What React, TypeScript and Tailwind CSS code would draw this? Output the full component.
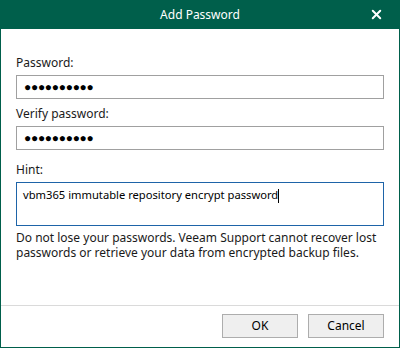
import { X } from "lucide-react";

const font = { fontFamily: '"Noto Sans", "Open Sans", sans-serif' };

function Field({ label, value }: { label: string; value: string }) {
  return (
    <div className="flex flex-col">
      <label className="h-[25px] flex items-center text-[12px] text-[#1a1a1a]">{label}</label>
      <div className="h-[24px] border border-[#a0a0a0] flex items-center px-[7px] text-[12px] tracking-[-0.3px] text-black leading-none">
        {value}
      </div>
    </div>
  );
}

export default function App() {
  return (
    <div className="w-[401px] h-[349px] bg-white" style={font}>
      <div className="w-[400px] h-[348px] flex flex-col border-x border-b border-[#005f4b]">
        <div className="h-[29px] -mx-px bg-[#005f4b] relative flex items-center justify-center text-white text-[12px]">
          Add Password
          <X className="absolute right-[16px] top-[7px] size-[15px]" strokeWidth={3.2} />
        </div>
        <div className="flex-1 flex flex-col px-[15px] pt-[21px]">
          <Field label="Password:" value="●●●●●●●●●●" />
          <div className="h-[2px]" />
          <Field label="Verify password:" value="●●●●●●●●●●" />
          <div className="h-[7px]" />
          <label className="h-[25px] flex items-center text-[12px] text-[#1a1a1a]">Hint:</label>
          <div className="h-[44px] border border-[#1e64a8] px-[6px] pt-[4px] text-[11.2px] text-black">
            vbm365 immutable repository encrypt password<span className="inline-block w-px h-[14px] bg-black align-middle" />
          </div>
          <p className="mt-[4px] text-[12px] leading-[15px] text-[#1a1a1a]">
            Do not lose your passwords. Veeam Support cannot recover lost passwords or retrieve your data from encrypted backup files.
          </p>
        </div>
        <div className="h-[42px] border-t border-[#dadada] flex justify-end items-start gap-[10px] pt-[8px] pr-[15px]">
          <button className="w-[76px] h-[24px] bg-[#efefef] border border-[#adadad] text-[12px] text-black">OK</button>
          <button className="w-[76px] h-[24px] bg-[#efefef] border border-[#adadad] text-[12px] text-black">Cancel</button>
        </div>
      </div>
    </div>
  );
}
